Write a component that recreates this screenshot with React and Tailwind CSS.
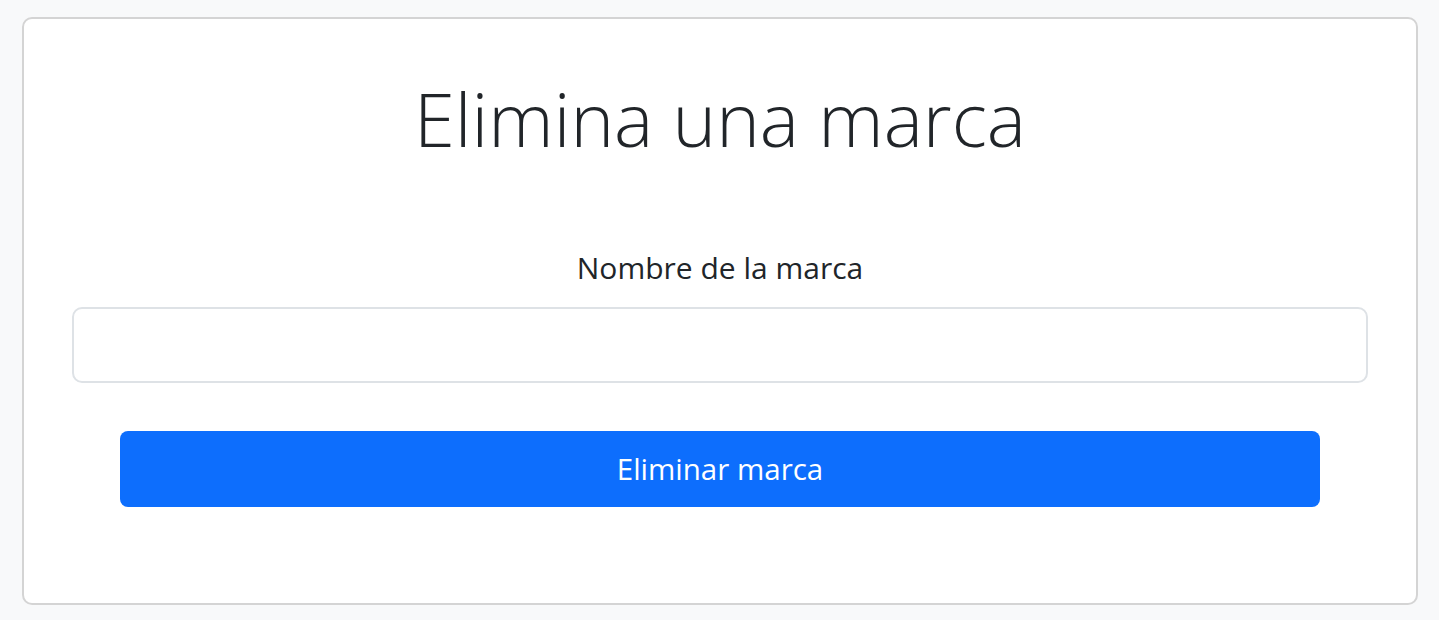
export default function App() {
  return (
    <div className="min-h-screen bg-[#f8f9fa] pl-[22px] pr-[21px] pt-[17px] pb-[16px]" style={{ fontFamily: '"Open Sans", "Noto Sans", sans-serif' }}>
      <div className="bg-white border-2 border-[#d4d4d4] rounded-[10px] px-[48px] pt-[56px] pb-[96px] text-[#212529]">
        <h1 className="text-center text-[74px] leading-[1.2] font-light">Elimina una marca</h1>

        <form className="mt-[86px] flex flex-col" onSubmit={(e) => e.preventDefault()}>
          <label className="text-center text-[30px] leading-[1.2] mb-[21px]">Nombre de la marca</label>
          <input
            type="text"
            className="h-[76px] w-full border-2 border-[#dee2e6] rounded-[10px] px-4 text-[30px] outline-none"
          />
          <button
            type="submit"
            className="mt-[48px] mx-[48px] h-[76px] bg-[#0d6efd] text-white text-[29.5px] rounded-[8px]"
          >
            Eliminar marca
          </button>
        </form>
      </div>
    </div>
  )
}
